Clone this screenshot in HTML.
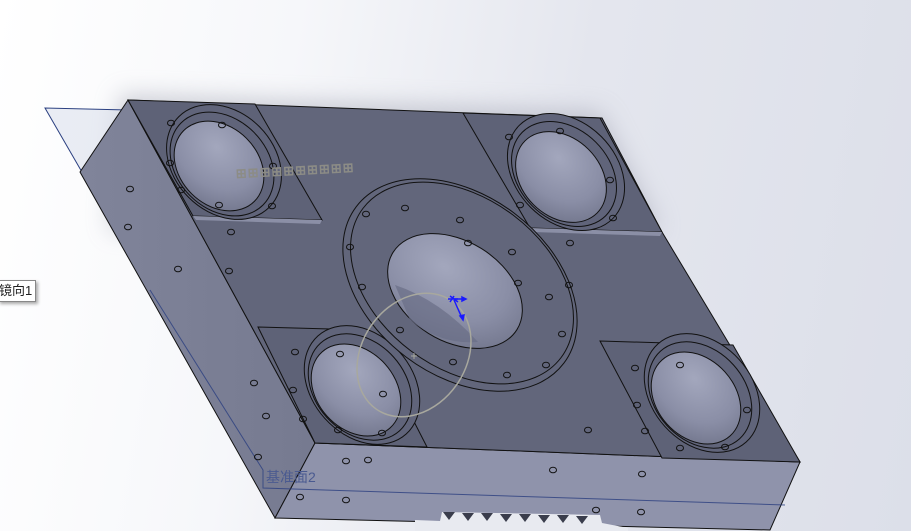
<!DOCTYPE html>
<html><head><meta charset="utf-8"><style>
html,body{margin:0;padding:0;width:911px;height:531px;overflow:hidden;
background:linear-gradient(100deg,#ffffff 0%,#f6f7fa 30%,#e4e6ee 60%,#dcdfe9 100%);}
svg{position:absolute;left:0;top:0}
.lbl{position:absolute;font-family:"Liberation Sans","Noto Sans CJK SC",sans-serif;}
</style></head><body>
<svg width="911" height="531" viewBox="0 0 911 531">
<defs>
<radialGradient id="hole" cx="0.35" cy="0.35" r="0.8">
<stop offset="0" stop-color="#a3a7bd"/><stop offset="0.6" stop-color="#8a8ea6"/><stop offset="1" stop-color="#6e7288"/></radialGradient>
<filter id="sh" x="-20%" y="-20%" width="140%" height="140%"><feGaussianBlur stdDeviation="12"/></filter>
<linearGradient id="lf" x1="0" y1="0" x2="1" y2="0"><stop offset="0" stop-color="#80849a"/><stop offset="1" stop-color="#767a90"/></linearGradient>
</defs>
<polygon points="120,95 600,112 660,230 110,230" fill="#9a9cac" opacity="0.5" filter="url(#sh)"/>
<!-- reference plane -->
<polygon points="45,108 128,110 80,172 150,290" fill="#d6dcea" opacity="0.5"/>
<polyline points="128,110 45,108 150,290" fill="none" stroke="#2a3f80" stroke-width="1"/>
<!-- left face -->
<polygon points="128,100 80,172 275,518 315,443" fill="url(#lf)" stroke="#111" stroke-width="1"/>
<!-- front face -->
<polygon points="315,443 800,462 770,530 275,518" fill="#8f93ab" stroke="#111" stroke-width="1"/>
<polyline points="150,290 263,470 263,488 785,505" fill="none" stroke="#2a3f80" stroke-width="1" opacity="0.8"/>
<!-- top face -->
<polygon points="128,100 602,118 662,232 800,462 315,443" fill="#62667b" stroke="#111" stroke-width="1"/>
<polygon points="128,100 255,104 322,220 193,216" fill="#5e6277" stroke="#111"/>
<polygon points="193,216 322,220 320,224 196,220" fill="#8b8fa6"/>
<polygon points="463,113 600,118 662,232 530,228" fill="#5e6277" stroke="#111"/>
<polygon points="530,228 662,232 660,236 532,232" fill="#8b8fa6"/>
<polygon points="258,327 367,330 427,447 315,443" fill="#5e6277" stroke="#111"/>
<polygon points="600,341 733,345 800,462 662,458" fill="#5e6277" stroke="#111"/>
<g stroke="#111" stroke-width="1">
<ellipse cx="224" cy="162" rx="64" ry="50" transform="rotate(45 224 162)" fill="#60647a"/>
<ellipse cx="222" cy="164" rx="58" ry="45" transform="rotate(45 222 164)" fill="none"/>
<ellipse cx="219" cy="166" rx="50" ry="39" transform="rotate(45 219 166)" fill="url(#hole)"/>
<ellipse cx="566" cy="172" rx="66" ry="50" transform="rotate(45 566 172)" fill="#60647a"/>
<ellipse cx="564" cy="174" rx="59" ry="45" transform="rotate(45 564 174)" fill="none"/>
<ellipse cx="561" cy="177" rx="51" ry="39" transform="rotate(45 561 177)" fill="url(#hole)"/>
<ellipse cx="362" cy="385" rx="66" ry="50" transform="rotate(48 362 385)" fill="#60647a"/>
<ellipse cx="360" cy="387" rx="59" ry="45" transform="rotate(48 360 387)" fill="none"/>
<ellipse cx="356" cy="390" rx="51" ry="39" transform="rotate(48 356 390)" fill="url(#hole)"/>
<ellipse cx="702" cy="393" rx="66" ry="50" transform="rotate(48 702 393)" fill="#60647a"/>
<ellipse cx="700" cy="395" rx="59" ry="45" transform="rotate(48 700 395)" fill="none"/>
<ellipse cx="696" cy="398" rx="51" ry="39" transform="rotate(48 696 398)" fill="url(#hole)"/>
<ellipse cx="460" cy="285" rx="130" ry="90" transform="rotate(37 460 285)" fill="#62667b"/>
<ellipse cx="462" cy="283" rx="124" ry="85" transform="rotate(37 462 283)" fill="none"/>
<ellipse cx="455" cy="291" rx="73" ry="50" transform="rotate(32 455 291)" fill="url(#hole)"/>
</g>
<path d="M395,285 Q440,300 478,342 Q440,345 410,320 Z" fill="#696d86" opacity="0.7"/>
<g fill="none" stroke="#111" stroke-width="1">
<ellipse cx="171" cy="123" rx="3.5" ry="2.8"/><ellipse cx="222" cy="125" rx="3.5" ry="2.8"/>
<ellipse cx="170" cy="163" rx="3.5" ry="2.8"/><ellipse cx="181" cy="190" rx="3.5" ry="2.8"/>
<ellipse cx="219" cy="205" rx="3.5" ry="2.8"/><ellipse cx="272" cy="206" rx="3.5" ry="2.8"/>
<ellipse cx="273" cy="166" rx="3.5" ry="2.8"/>
<ellipse cx="130" cy="189" rx="3.5" ry="2.8"/><ellipse cx="128" cy="227" rx="3.5" ry="2.8"/>
<ellipse cx="178" cy="269" rx="3.5" ry="2.8"/><ellipse cx="231" cy="232" rx="3.5" ry="2.8"/>
<ellipse cx="229" cy="271" rx="3.5" ry="2.8"/>
<ellipse cx="405" cy="208" rx="3.5" ry="2.8"/><ellipse cx="366" cy="214" rx="3.5" ry="2.8"/>
<ellipse cx="350" cy="247" rx="3.5" ry="2.8"/><ellipse cx="460" cy="220" rx="3.5" ry="2.8"/>
<ellipse cx="468" cy="243" rx="3.5" ry="2.8"/><ellipse cx="512" cy="252" rx="3.5" ry="2.8"/>
<ellipse cx="518" cy="283" rx="3.5" ry="2.8"/><ellipse cx="549" cy="297" rx="3.5" ry="2.8"/>
<ellipse cx="562" cy="334" rx="3.5" ry="2.8"/><ellipse cx="546" cy="365" rx="3.5" ry="2.8"/>
<ellipse cx="507" cy="375" rx="3.5" ry="2.8"/><ellipse cx="453" cy="362" rx="3.5" ry="2.8"/>
<ellipse cx="400" cy="330" rx="3.5" ry="2.8"/><ellipse cx="362" cy="287" rx="3.5" ry="2.8"/>
<ellipse cx="570" cy="243" rx="3.5" ry="2.8"/><ellipse cx="569" cy="285" rx="3.5" ry="2.8"/>
<ellipse cx="509" cy="137" rx="3.5" ry="2.8"/><ellipse cx="560" cy="131" rx="3.5" ry="2.8"/>
<ellipse cx="520" cy="205" rx="3.5" ry="2.8"/><ellipse cx="610" cy="180" rx="3.5" ry="2.8"/>
<ellipse cx="613" cy="218" rx="3.5" ry="2.8"/>
<ellipse cx="295" cy="352" rx="3.5" ry="2.8"/><ellipse cx="340" cy="354" rx="3.5" ry="2.8"/>
<ellipse cx="293" cy="390" rx="3.5" ry="2.8"/><ellipse cx="303" cy="419" rx="3.5" ry="2.8"/>
<ellipse cx="338" cy="430" rx="3.5" ry="2.8"/><ellipse cx="382" cy="433" rx="3.5" ry="2.8"/>
<ellipse cx="383" cy="394" rx="3.5" ry="2.8"/>
<ellipse cx="254" cy="383" rx="3.5" ry="2.8"/><ellipse cx="258" cy="457" rx="3.5" ry="2.8"/>
<ellipse cx="266" cy="416" rx="3.5" ry="2.8"/>
<ellipse cx="588" cy="430" rx="3.5" ry="2.8"/>
<ellipse cx="635" cy="368" rx="3.5" ry="2.8"/><ellipse cx="680" cy="365" rx="3.5" ry="2.8"/>
<ellipse cx="637" cy="405" rx="3.5" ry="2.8"/><ellipse cx="645" cy="431" rx="3.5" ry="2.8"/>
<ellipse cx="680" cy="448" rx="3.5" ry="2.8"/><ellipse cx="725" cy="447" rx="3.5" ry="2.8"/>
<ellipse cx="747" cy="410" rx="3.5" ry="2.8"/>
<ellipse cx="346" cy="461" rx="3.5" ry="2.8"/><ellipse cx="368" cy="460" rx="3.5" ry="2.8"/>
<ellipse cx="553" cy="470" rx="3.5" ry="2.8"/><ellipse cx="642" cy="474" rx="3.5" ry="2.8"/>
<ellipse cx="300" cy="497" rx="3.5" ry="2.8"/><ellipse cx="346" cy="500" rx="3.5" ry="2.8"/>
<ellipse cx="596" cy="510" rx="3.5" ry="2.8"/><ellipse cx="641" cy="512" rx="3.5" ry="2.8"/>
</g>
<g fill="#3a3d4c">
<path d="M415,520 L440,521 L442,512 L600,515 L602,523 L628,528 L628,531 L415,531Z" fill="#e8eaf0"/>
<path d="M443,512h12l-6,8z"/><path d="M462,513h12l-6,8z"/><path d="M481,513h12l-6,8z"/><path d="M500,514h12l-6,8z"/>
<path d="M519,514h12l-6,8z"/><path d="M538,515h12l-6,8z"/><path d="M557,515h12l-6,8z"/><path d="M576,516h12l-6,8z"/>
</g>
<ellipse cx="414" cy="355" rx="66" ry="52" transform="rotate(-55 414 355)" fill="none" stroke="#a8a89e" stroke-width="1.5"/>
<path d="M411,356h6M414,353v6" stroke="#a8a89e"/>
<text x="236" y="178" font-family="Liberation Sans" font-size="13" font-weight="bold" fill="#8c8c86" letter-spacing="1" transform="rotate(-3 236 178)">⊞⊞⊞⊞⊞⊞⊞⊞⊞⊞</text>
<g stroke="#1a1aff" stroke-width="1.5" fill="#1a1aff">
<path d="M450,296l8,6M454,296l-4,6M448,299h10"/>
<path d="M454,299h10"/><path d="M454,300l8,18"/>
<path d="M462,297l4,2-4,2z"/><path d="M460,316l3,4 1,-5z"/>
</g>
</svg>
<div class="lbl" style="left:-2px;top:280px;width:36px;height:20px;background:#fff;border:1px solid #888;box-shadow:2px 2px 3px #aaa;font-size:13px;line-height:20px;color:#222;">镜向1</div>
<div class="lbl" style="left:266px;top:467px;font-size:14px;color:#4a5a90;">基准面2</div>
</body></html>
